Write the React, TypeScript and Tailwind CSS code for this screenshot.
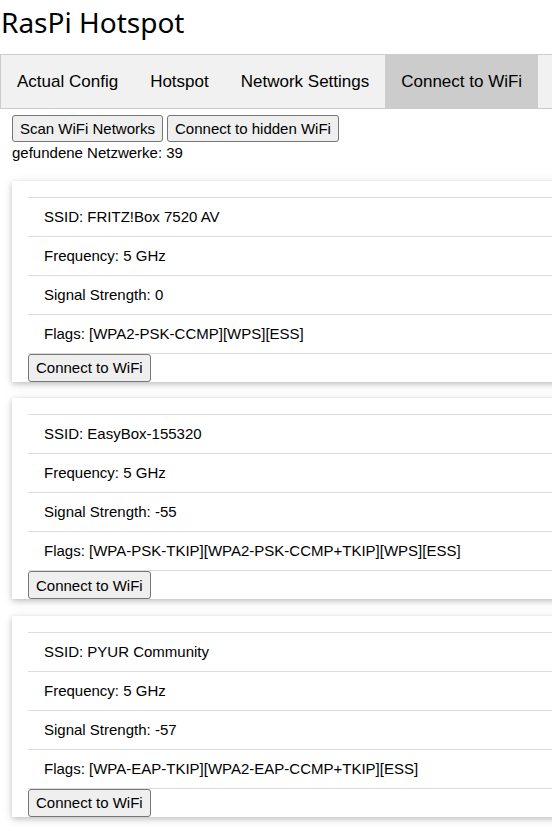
import React from 'react';

interface Network {
  ssid: string;
  frequency: string;
  signal: string;
  flags: string;
}

const networks: Network[] = [
  { ssid: 'FRITZ!Box 7520 AV', frequency: '5 GHz', signal: '0', flags: '[WPA2-PSK-CCMP][WPS][ESS]' },
  { ssid: 'EasyBox-155320', frequency: '5 GHz', signal: '-55', flags: '[WPA-PSK-TKIP][WPA2-PSK-CCMP+TKIP][WPS][ESS]' },
  { ssid: 'PYUR Community', frequency: '5 GHz', signal: '-57', flags: '[WPA-EAP-TKIP][WPA2-EAP-CCMP+TKIP][ESS]' },
];

const tabs = ['Actual Config', 'Hotspot', 'Network Settings', 'Connect to WiFi'];

const btn =
  'h-[27px] px-[7px] text-[15px] leading-none text-black bg-[#efefef] border border-[#767676] rounded-[3px]';

const NetworkCard: React.FC<{ net: Network }> = ({ net }) => {
  const rows = [
    `SSID: ${net.ssid}`,
    `Frequency: ${net.frequency}`,
    `Signal Strength: ${net.signal}`,
    `Flags: ${net.flags}`,
  ];
  return (
    <div className="ml-3 mb-[16.5px] bg-white pl-4 pt-4 shadow-[0_2px_5px_0_rgba(0,0,0,0.16),0_2px_10px_0_rgba(0,0,0,0.12)]">
      <ul className="border-t border-[#ddd]">
        {rows.map((r) => (
          <li key={r} className="px-4 py-2 leading-[22px] text-[15px] border-b border-[#ddd] whitespace-nowrap">
            {r}
          </li>
        ))}
      </ul>
      <button className={`${btn} h-[28px] block`}>Connect to WiFi</button>
    </div>
  );
};

export default function App() {
  return (
    <div className="w-[552px] h-[831px] overflow-hidden bg-white text-black font-['Liberation_Sans',Arial,sans-serif]">
      <div className="w-[640px]">
        <h1 className="h-[54px] pt-[3px] pl-[1px] text-[28px] leading-[38px] font-normal font-['Noto_Sans',sans-serif]">
          RasPi Hotspot
        </h1>
        <div className="flex border border-[#ccc] bg-[#f1f1f1]">
          {tabs.map((t) => (
            <div
              key={t}
              className={`h-[53px] px-4 flex items-center text-[17px] ${t === 'Connect to WiFi' ? 'bg-[#ccc]' : ''}`}
            >
              {t}
            </div>
          ))}
        </div>
        <div className="flex gap-[4px] pl-3 mt-[6px]">
          <button className={btn}>Scan WiFi Networks</button>
          <button className={btn}>Connect to hidden WiFi</button>
        </div>
        <div className="pl-3 text-[15px] leading-[22.5px]">gefundene Netzwerke: 39</div>
        <div className="mt-[16px]">
          {networks.map((n) => (
            <NetworkCard key={n.ssid} net={n} />
          ))}
        </div>
      </div>
    </div>
  );
}
